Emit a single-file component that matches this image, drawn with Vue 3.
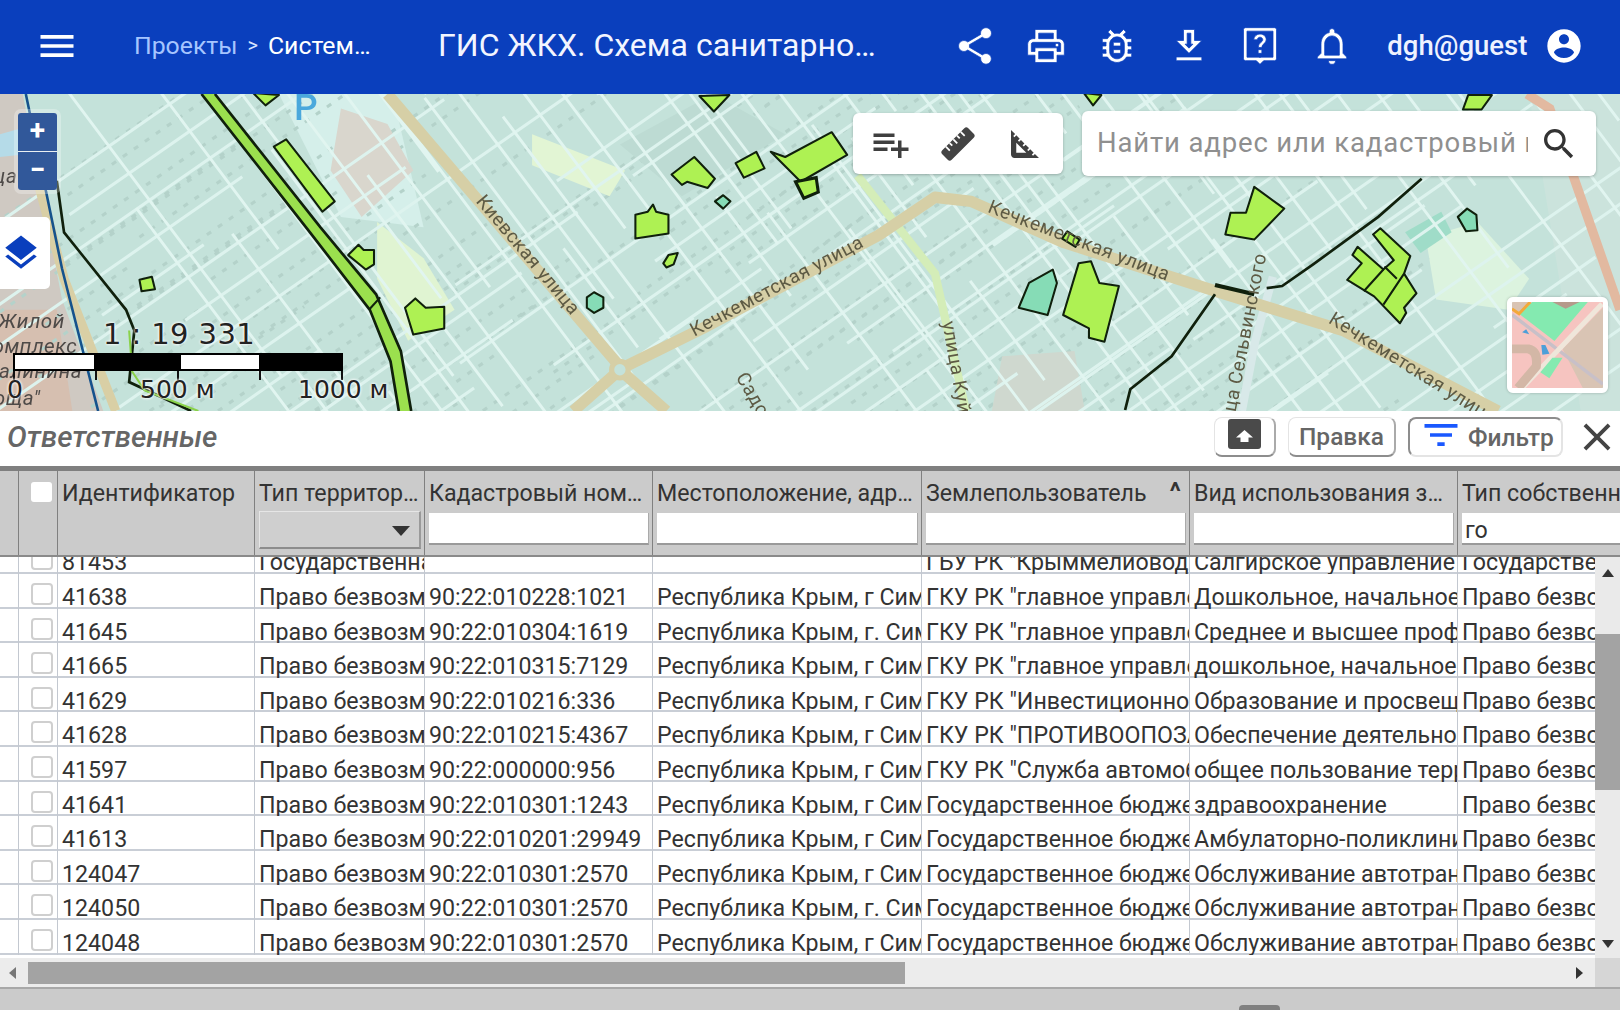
<script setup>
const cols = ['Идентификатор', 'Тип территории', 'Кадастровый номер участка', 'Местоположение, адрес участка', 'Землепользователь', 'Вид использования земли', 'Тип собственности']
const P = 'Право безвозмездного пользования'
const R = 'Республика Крым, г Симферополь'
const G = 'Государственное бюджетное учреждение'
const O = 'Обслуживание автотранспорта'
const rows = [
  ['81453', 'Государственная', '', '', 'ГБУ РК  "Крыммелиоводхоз"', 'Салгирское управление', 'Государственная'],
  ['41638', P, '90:22:010228:1021', R, 'ГКУ РК "главное управление', 'Дошкольное, начальное', P],
  ['41645', P, '90:22:010304:1619', 'Республика Крым, г. Симферополь', 'ГКУ РК "главное управление', 'Среднее и высшее профессиональное', P],
  ['41665', P, '90:22:010315:7129', R, 'ГКУ РК "главное управление', 'дошкольное, начальное и среднее', P],
  ['41629', P, '90:22:010216:336', R, 'ГКУ РК "Инвестиционно-строительное', 'Образование и просвещение', P],
  ['41628', P, '90:22:010215:4367', R, 'ГКУ РК "ПРОТИВООПОЗАРНАЯ', 'Обеспечение деятельности', P],
  ['41597', P, '90:22:000000:956', R, 'ГКУ РК "Служба автомобильных', 'общее пользование территории', P],
  ['41641', P, '90:22:010301:1243', R, G, 'здравоохранение', P],
  ['41613', P, '90:22:010201:29949', R, G, 'Амбулаторно-поликлиническое', P],
  ['124047', P, '90:22:010301:2570', R, G, O, P],
  ['124050', P, '90:22:010301:2570', 'Республика Крым, г. Симферополь', G, O, P],
  ['124048', P, '90:22:010301:2570', R, G, O, P],
]
const topIcons = [
  'M18 16.08c-.76 0-1.44.3-1.96.77L8.91 12.7c.05-.23.09-.46.09-.7s-.04-.47-.09-.7l7.05-4.11c.54.5 1.25.81 2.04.81 1.66 0 3-1.34 3-3s-1.34-3-3-3-3 1.34-3 3c0 .24.04.47.09.7L8.04 9.81C7.5 9.31 6.79 9 6 9c-1.66 0-3 1.34-3 3s1.34 3 3 3c.79 0 1.5-.31 2.04-.81l7.12 4.16c-.05.21-.08.43-.08.65 0 1.61 1.31 2.92 2.92 2.92 1.61 0 2.92-1.31 2.92-2.92s-1.31-2.92-2.92-2.92z',
  'M19 8h-1V3H6v5H5c-1.66 0-3 1.34-3 3v6h4v4h12v-4h4v-6c0-1.66-1.34-3-3-3zM8 5h8v3H8V5zm8 12v2H8v-4h8v2zm2-2v-2H6v2H4v-4c0-.55.45-1 1-1h14c.55 0 1 .45 1 1v4h-2z M18 10.5a1 1 0 1 1 0 2 1 1 0 0 1 0-2z',
  'M20 8h-2.81c-.45-.78-1.07-1.45-1.82-1.96L17 4.41 15.59 3l-2.17 2.17C12.96 5.06 12.49 5 12 5c-.49 0-.96.06-1.41.17L8.41 3 7 4.41l1.62 1.63C7.88 6.55 7.26 7.22 6.81 8H4v2h2.09c-.05.33-.09.66-.09 1v1H4v2h2v1c0 .34.04.67.09 1H4v2h2.81c1.04 1.79 2.97 3 5.19 3s4.15-1.21 5.19-3H20v-2h-2.09c.05-.33.09-.66.09-1v-1h2v-2h-2v-1c0-.34-.04-.67-.09-1H20V8zm-4 7c0 2.21-1.79 4-4 4s-4-1.79-4-4v-4c0-2.21 1.79-4 4-4s4 1.79 4 4v4zm-6-1h4v2h-4zm0-4h4v2h-4z',
  'M19 9h-4V3H9v6H5l7 7 7-7zm-8 2V5h2v6h1.17L12 13.17 9.83 11H11zm-6 7h14v2H5z',
  'M4 2h16a1 1 0 0 1 1 1v16a1 1 0 0 1-1 1h-6l-2 2-2-2H4a1 1 0 0 1-1-1V3a1 1 0 0 1 1-1zm.9 1.9v14.200h6.700l.4.4.4-.4h6.700V3.900H4.900z M11 14h2v2h-2z M12 5.500c-1.900 0-3.300 1.300-3.400 3.100h1.900c.1-.8.7-1.400 1.500-1.400s1.500.6 1.500 1.400c0 1.400-2.400 1.600-2.400 4.200h1.900c0-1.900 2.400-2.300 2.400-4.200 0-1.800-1.500-3.100-3.400-3.100z',
  'M12 22c1.100 0 2-.9 2-2h-4c0 1.100.9 2 2 2zm6-6v-5c0-3.070-1.630-5.640-4.500-6.320V4c0-.83-.67-1.500-1.500-1.500s-1.500.67-1.500 1.500v.68C7.640 5.360 6 7.920 6 11v5l-2 2v1h16v-1l-2-2zm-2 1H8v-6c0-2.480 1.510-4.500 4-4.500s4 2.020 4 4.500v6z',
]

// Street network of the base map: two families of parallel streets with a fixed jitter.
function family(dx, dy, ox, oy, nx, ny, count, step, seed, base = 60, grow = 70) {
  const out = []
  for (let i = 0; i < count; i++) {
    const j = ((i * 37 + seed) % 17) - 8
    const cx = ox + nx * i * step + j
    const cy = oy + ny * i * step + j * 0.4
    const len = base + ((i * 53 + seed) % 5) * grow
    const off = (((i * 29 + seed) % 9) - 4) * 35
    out.push(`M${cx + dx * (off - len)} ${cy + dy * (off - len)}L${cx + dx * (off + len)} ${cy + dy * (off + len)}`)
  }
  return out.join('')
}
const streetsA = family(0.82, -0.57, 130, 130, 0.57, 0.82, 34, 30, 3) + family(0.82, -0.57, 700, 60, 0.57, 0.82, 30, 24, 11) + family(0.82, -0.57, 1150, 40, 0.57, 0.82, 26, 26, 5)
const streetsB = family(0.6, 0.8, 90, 120, 0.8, -0.6, 30, 34, 7) + family(0.6, 0.8, 300, 420, 0.8, -0.6, 44, 28, 2) + family(0.6, 0.8, 900, 420, 0.8, -0.6, 28, 30, 13)
const houses = family(0.82, -0.57, 140, 120, 0.57, 0.82, 60, 15, 4, 50, 60) + family(0.82, -0.57, 760, 50, 0.57, 0.82, 60, 13, 9, 50, 60)

const green = [
  '245,90 270,92 257,102', '265,142 277,135 324,195 312,205', '677,93 706,92 691,108',
  '650,169 672,152 692,173 685,182 665,176 660,179', '712,158 732,147 740,163 720,172',
  '746,147 760,152 805,128 820,150 775,176', '615,208 627,205 632,198 635,205 647,208 647,226 615,231',
  '642,255 647,247 656,245 652,256 645,259', '337,247 347,237 352,242 362,242 362,256 354,261',
  '135,271 147,268 150,280 137,282', '392,298 402,289 412,298 430,297 430,318 400,324',
  '1049,90 1066,92 1058,102', '1416,106 1421,92 1444,92 1434,106',
  '1214,181 1243,202 1214,232 1186,227 1191,206 1206,206', '1028,231 1033,224 1045,232 1041,239',
  '1329,227 1336,221 1365,248 1359,265 1371,284 1359,298 1361,303 1355,313 1330,287 1304,271 1318,255 1309,247 1314,239 1339,261 1349,252',
  '1044,255 1056,253 1064,274 1083,277 1069,331 1054,327 1054,318 1029,305',
]
const teal = ['692,195 700,189 707,195 700,202', '1411,210 1420,202 1429,208 1430,223 1419,224', '986,298 996,274 1019,261 1023,274 1014,305', '568,288 575,283 584,288 584,298 575,303 568,298']
</script>

<template>
  <div class="page">
    <header class="top">
      <svg class="ico menu" viewBox="0 0 24 24"><path d="M3 18h18v-2H3v2zm0-5h18v-2H3v2zm0-7v2h18V6H3z" /></svg>
      <div class="crumbs"><span class="crumb-a">Проекты</span><span class="crumb-sep">&gt;</span><span class="crumb-b">Система управления</span></div>
      <div class="title">ГИС ЖКХ. Схема санитарного состояния</div>
      <div class="top-icons">
        <span v-for="(d, i) in topIcons" :key="i" class="top-cell"><svg class="ico" viewBox="0 0 24 24"><path :d="d" fill-rule="evenodd" /></svg></span>
      </div>
      <div class="user">dgh@guest</div>
      <svg class="ico avatar" viewBox="0 0 24 24"><path d="M12 2C6.48 2 2 6.48 2 12s4.48 10 10 10 10-4.48 10-10S17.52 2 12 2zm0 3c1.66 0 3 1.34 3 3s-1.34 3-3 3-3-1.34-3-3 1.34-3 3-3zm0 14.2c-2.5 0-4.71-1.28-6-3.22.03-1.99 4-3.08 6-3.08 1.99 0 5.97 1.09 6 3.08-1.29 1.94-3.5 3.22-6 3.22z" /></svg>
    </header>

    <section class="map">
      <svg class="base" viewBox="0 91 1568 307" preserveAspectRatio="none">
        <rect x="0" y="91" width="1568" height="307" fill="#c4e2da" />
        <polygon points="0,91 22,91 60,290 100,398 0,398" fill="#cfc9c2" />
        <polygon points="0,300 55,300 70,398 0,398" fill="#d6bfb0" />
        <polygon points="0,130 18,125 18,150 0,152" fill="#b5dbe8" />
        <polygon points="1480,91 1568,91 1568,398 1530,398" fill="#cbe3dc" />
        <polygon points="270,91 380,91 410,220 330,210" fill="#d5efea" />
        <path :d="houses" stroke="#b4d2ca" stroke-width="3" stroke-dasharray="5 8" fill="none" />
        <polygon points="330,105 375,120 400,165 350,210 320,165" fill="#d9d6cd" />
        <polygon points="600,140 690,91 760,130 660,190" fill="#bddbd3" />
        <polygon points="515,130 605,165 590,190 515,160" fill="#e2f5d4" />
        <polygon points="365,215 410,250 440,300 395,330 365,270" fill="#e0f4d2" />
        <polygon points="1380,230 1430,215 1480,270 1460,300 1390,290" fill="#dcf3df" />
        <polygon points="1360,225 1395,205 1405,225 1375,245" fill="#9fdcc8" />
        <polygon points="970,345 1040,340 1050,398 960,398" fill="#cfd8cf" />
        <path :d="streetsA" stroke="#ddf3ee" stroke-width="3" fill="none" />
        <path :d="streetsB" stroke="#e1f5f0" stroke-width="2.8" fill="none" />
        <path d="M830 170L905 265L935 398" stroke="#d4edb8" stroke-width="8" fill="none" />
        <path d="M1232 268L1215 330L1202 398" stroke="#d8e9e9" stroke-width="8" fill="none" />
        <path d="M375 91L600 355M600 358L555 398M600 358L645 398M605 355L680 318L850 228L905 191L940 195L1030 235L1180 283L1300 320L1450 398" stroke="#d6cfa6" stroke-width="11" fill="none" stroke-linejoin="round" />
        <circle cx="600" cy="358" r="8" fill="#c4e2da" stroke="#d6cfa6" stroke-width="5" />
        <path d="M1478 91L1500 105L1568 300" stroke="#e2b9a0" stroke-width="9" fill="none" />
        <path d="M35 170L62 270L112 398" stroke="#d9cfa5" stroke-width="9" fill="none" />
        <path d="M25 91L60 260L95 398" stroke="#15528c" stroke-width="2.5" fill="none" />
        <path d="M195 91L300 225L358 300L378 350L386 398L398 398L388 340L364 285L310 220L208 91Z" fill="#9be04e" />
        <path d="M195 91L300 225L358 300L378 350L386 398M208 91L310 220L364 285L388 340L398 398" fill="none" stroke="#10200c" stroke-width="2.6" />
        <path d="M358 299L368 288" stroke="#10200c" stroke-width="2" />
        <path d="M55 175L62 225L78 245L122 300L130 320L125 370L185 398" fill="none" stroke="#10200c" stroke-width="2.6" />
        <path d="M125 320L128 360L140 378L192 398" fill="none" stroke="#8ad24a" stroke-width="2" />
        <g fill="#aef153" stroke="#10200c" stroke-width="2" stroke-linejoin="round">
          <polygon v-for="(p, i) in green" :key="i" :points="p" />
        </g>
        <g fill="#86dcb6" stroke="#10200c" stroke-width="2" stroke-linejoin="round">
          <polygon v-for="(p, i) in teal" :key="i" :points="p" />
        </g>
        <polygon points="770,176 790,172 792,186 778,192" fill="#aef153" stroke="#10200c" stroke-width="3" />
        <path d="M1339 261L1320 282M1359 265L1339 295M1340 258L1352 270" fill="none" stroke="#10200c" stroke-width="2" />
        <path d="M1376 173L1334 210L1271 256L1241 277L1226 279" fill="none" stroke="#10200c" stroke-width="2.6" />
        <path d="M1176 276L1214 285" stroke="#10200c" stroke-width="4" />
        <path d="M1176 285L1134 345L1094 377L1089 397" fill="none" stroke="#10200c" stroke-width="2.6" />
        <text x="296" y="116" class="parking">P</text>
        <g class="road-label">
          <text transform="translate(460 195) rotate(50)">Киевская улица</text>
          <text transform="translate(672 326) rotate(-28)">Кечкеметская улица</text>
          <text transform="translate(955 205) rotate(21)">Кечкеметская улица</text>
          <text transform="translate(1285 312) rotate(32)">Кечкеметская улица</text>
          <text transform="translate(912 312) rotate(80)">улица Куйбышева</text>
          <text transform="translate(1190 430) rotate(-79)">улица Сельвинского</text>
          <text transform="translate(712 365) rotate(60)">Садовая</text>
          <text transform="translate(-2 318)" class="dark">Жилой</text>
          <text transform="translate(-18 342)" class="dark">комплекс</text>
          <text transform="translate(-14 366)" class="dark">Калинина</text>
          <text transform="translate(-6 392)" class="dark">оща"</text>
          <text transform="translate(-18 177)" class="dark">ица</text>
        </g>
      </svg>

      <div class="zoom-ctl">
        <div class="zoom-btn">+</div>
        <div class="zoom-btn">−</div>
      </div>
      <div class="layers">
        <svg class="layers-ico" viewBox="0 0 24 24"><path d="M11.99 18.54l-7.37-5.73L3 14.07l9 7 9-7-1.63-1.27-7.38 5.74zM12 16l7.36-5.73L21 9l-9-7-9 7 1.63 1.27L12 16z" /></svg>
      </div>

      <div class="scale">
        <div class="ratio">1 : 19 331</div>
        <div class="bar"><i class="w"></i><i class="b"></i><i class="w w2"></i><i class="b b2"></i></div>
        <div class="ticks"><i v-for="n in 5" :key="n"></i></div>
        <div class="labels"><span>0</span><span>500 м</span><span>1000 м</span></div>
      </div>

      <div class="tools">
        <svg class="tool" viewBox="0 0 24 24"><path d="M14 10H2v2h12v-2zm0-4H2v2h12V6zm4 8v-4h-2v4h-4v2h4v4h2v-4h4v-2h-4zM2 16h8v-2H2v2z" /></svg>
        <svg class="tool" viewBox="0 0 24 24"><g transform="rotate(-45 12 12)"><rect x="1.500" y="8.200" width="21" height="7.600" rx="1.600" fill="#444" /><path d="M6 8.200v3.200M9 8.200v2.200M12 8.200v3.200M15 8.200v2.200M18 8.200v3.200" stroke="#fff" stroke-width="1" /></g></svg>
        <svg class="tool" viewBox="0 0 24 24"><path d="M17.66 17.66l-1.06 1.06-.71-.71 1.06-1.06-1.94-1.94-1.06 1.06-.71-.71 1.06-1.06-1.94-1.94-1.06 1.06-.71-.71 1.06-1.06L9.7 9.7l-1.06 1.06-.71-.71 1.06-1.06-1.94-1.94-1.06 1.06-.71-.71 1.06-1.06L4 4v14c0 1.1.9 2 2 2h14l-2.34-2.34zM7 17v-5.76L12.76 17H7z" /></svg>
      </div>
      <div class="search">
        <input class="search-input" placeholder="Найти адрес или кадастровый номер" />
        <svg class="search-ico" viewBox="0 0 24 24"><path d="M15.5 14h-.79l-.28-.27C15.41 12.59 16 11.11 16 9.5 16 5.91 13.09 3 9.5 3S3 5.91 3 9.5 5.91 16 9.5 16c1.61 0 3.09-.59 4.23-1.57l.27.28v.79l5 4.99L20.49 19l-4.99-5zm-6 0C7.01 14 5 11.99 5 9.5S7.01 5 9.5 5 14 7.01 14 9.5 11.99 14 9.5 14z" /></svg>
      </div>
      <div class="minimap">
        <svg viewBox="0 0 90 88" preserveAspectRatio="none">
          <rect width="90" height="88" fill="#f6c4c0" />
          <polygon points="7,12 20,0 75,0 42,40" fill="#84eab0" />
          <polygon points="50,48 90,6 90,88 70,88" fill="#d9c4b4" />
          <polygon points="0,0 18,0 7,12 0,7" fill="#d9c4b4" />
          <path d="M0 13L90 84" stroke="#c8c0c8" stroke-width="3.500" />
          <path d="M89 2L10 88" stroke="#efe6da" stroke-width="5" />
          <path d="M0 7L7 12L18 0" stroke="#f3a93a" stroke-width="3" fill="none" />
          <path d="M0 48H16Q26 50 24 66L6 88" stroke="#d3b7a6" stroke-width="9" fill="none" />
          <polygon points="40,57 50,57 37,78 28,72" fill="#84eab0" />
          <polygon points="29,44 33,44 37,53 30,54" fill="#4d9fd8" />
          <polygon points="10,31 14,28 17,33" fill="#4d9fd8" />
          <polygon points="40,0 67,0 53,7" fill="#b59a8b" />
        </svg>
      </div>
    </section>

    <section class="panel">
      <div class="bar-top">
        <div class="panel-title">Ответственные</div>
        <div class="btn btn-icon">
          <svg class="upload" viewBox="0 0 33 30"><rect width="33" height="30" rx="3" fill="#4a4a4a" /><path d="M16.5 11L25 18.5H20.5V23H12.500V18.500H8Z" fill="#fff" /></svg>
        </div>
        <div class="btn">Правка</div>
        <div class="btn btn-filter">
          <svg class="filter-ico" viewBox="0 0 24 24"><path d="M10 18h4v-2h-4v2zM3 6v2h18V6H3zm3 7h12v-2H6v2z" /></svg>
          <span>Фильтр</span>
        </div>
        <svg class="close" viewBox="0 0 24 24"><path d="M19 6.410L17.590 5 12 10.590 6.410 5 5 6.410 10.590 12 5 17.590 6.410 19 12 13.410 17.590 19 19 17.590 13.410 12z" /></svg>
      </div>

      <div class="grid-head">
        <div class="hcell"></div>
        <div class="hcell check-h"><span class="cb-white"></span></div>
        <div v-for="(c, i) in cols" :key="c" class="hcell" :class="{ sorted: i === 4, last: i === 6 }">
          <div class="hlabel">{{ c }}</div>
          <span v-if="i === 4" class="sort">^</span>
          <div v-if="i === 1" class="hselect"><span class="caret"></span></div>
          <div v-else-if="i > 1" class="hinput">{{ i === 6 ? 'го' : '' }}</div>
        </div>
      </div>

      <div class="grid-main">
        <div class="grid-body">
          <div class="rows">
            <div v-for="r in rows" :key="r[0]" class="row">
              <div class="cell"></div>
              <div class="cell check"><span class="cb"></span></div>
              <div v-for="(v, i) in r" :key="i" class="cell text">{{ v }}</div>
            </div>
          </div>
        </div>
        <div class="vscroll">
          <span class="arr up"></span>
          <div class="vspace"><div class="vthumb"></div></div>
          <span class="arr down"></span>
        </div>
      </div>

      <div class="hscroll-row">
        <div class="hscroll">
          <span class="arr left"></span>
          <div class="hspace"><div class="hthumb"></div></div>
          <span class="arr right"></span>
        </div>
        <div class="corner"></div>
      </div>

      <div class="footer"><div class="grip"></div></div>
    </section>
  </div>
</template>

<style>
html, body { margin: 0; padding: 0; background: #fff; overflow: hidden; }
</style>

<style scoped>
.page { width: 1620px; height: 1010px; display: flex; flex-direction: column; overflow: hidden; font-family: Roboto, "Noto Sans", sans-serif; color: #333; }

.top { flex: 0 0 94px; background: #0a3fbd; display: flex; align-items: center; color: #fff; }
.ico { width: 44px; height: 44px; fill: #fff; flex: none; }
.menu { margin-left: 35px; margin-top: -2px; }
.crumbs { margin-left: 55px; width: 248px; display: flex; align-items: center; font-size: 24.800px; white-space: nowrap; margin-top: -4px; }
.crumb-a { color: #a6c5ff; }
.crumb-sep { color: #d8e4ff; margin: 0 10px; font-size: 20px; }
.crumb-b { color: #fff; width: 104px; overflow: hidden; text-overflow: ellipsis; font-weight: 400; }
.title { margin-left: 56px; width: 441px; font-size: 32px; white-space: nowrap; overflow: hidden; text-overflow: ellipsis; color: #f2f5ff; margin-top: -4px; }
.top-icons { margin-left: 60px; display: flex; margin-top: -2px; }
.top-cell { width: 71.4px; display: flex; justify-content: center; }
.top-cell path { stroke: #0a3fbd; stroke-width: .4; }
.user { margin-left: 20px; font-size: 27.500px; font-weight: 500; color: #eef2ff; width: 149px; margin-top: -4px; white-space: nowrap; }
.avatar { width: 40px; height: 40px; margin-left: 8px; margin-top: -2px; }

.map { flex: 0 0 317px; position: relative; overflow: hidden; background: #c4e2da; }
.base { position: absolute; inset: 0; width: 100%; height: 100%; filter: blur(0.7px); }
.parking { fill: #4aa8dc; font: 500 36px Roboto, sans-serif; text-anchor: middle; }
.road-label text { font: 18.500px Roboto, sans-serif; fill: #5d5a44; letter-spacing: .5px; }
.road-label text.dark { font: italic 20px Roboto, sans-serif; fill: #4e4a48; }

.zoom-ctl { position: absolute; left: 18px; top: 19px; width: 39px; height: 77px; border-radius: 3px; overflow: hidden; display: flex; flex-direction: column; gap: 1px; background: #e9eff2; box-shadow: 0 0 0 4px rgba(255,255,255,.28); }
.zoom-btn { flex: 1; background: #31589a; color: #fff; font-size: 28px; font-weight: 700; line-height: 36px; text-align: center; }
.layers { position: absolute; left: 0; top: 123px; width: 50px; height: 72px; background: #fff; border-radius: 0 5px 5px 0; display: flex; align-items: center; justify-content: center; }
.layers-ico { width: 42px; height: 42px; fill: #0a3fbd; margin-left: -8px; }

.scale { position: absolute; left: 13px; top: 222px; width: 400px; height: 95px; }
.ratio { font: 29px "DejaVu Sans", sans-serif; letter-spacing: .4px; color: #222; margin-left: 90px; line-height: 36px; text-shadow: 0 0 3px #fff, 0 0 3px #fff; }
.bar { width: 330px; height: 18px; display: flex; background: #000; box-sizing: border-box; border: 2px solid #000; margin-top: 1px; }
.bar i { display: block; height: 100%; }
.bar .w { width: 79px; background: #fff; }
.bar .b { width: 87px; background: #000; }
.bar .b2 { width: 82px; }
.ticks { display: flex; width: 330px; height: 9px; justify-content: space-between; }
.ticks i { display: block; width: 2px; height: 9px; background: #111; }
.labels { position: relative; font: 25px "DejaVu Sans", sans-serif; color: #222; display: flex; text-shadow: 0 0 3px #fff, 0 0 3px #fff; margin-top: -5px; white-space: nowrap; }
.labels span:nth-child(1) { margin-left: -6px; width: 133px; }
.labels span:nth-child(2) { width: 158px; }

.tools { position: absolute; left: 853px; top: 19px; width: 210px; height: 61px; background: #fff; border-radius: 6px; box-shadow: 0 1px 3px rgba(0,0,0,.25); display: flex; align-items: center; padding-left: 17px; gap: 25px; box-sizing: border-box; }
.tool { width: 42px; height: 42px; fill: #3f3f3f; flex: none; }
.search { position: absolute; left: 1082px; top: 17px; width: 514px; height: 65px; background: #fff; border-radius: 6px; box-shadow: 0 1px 3px rgba(0,0,0,.25); display: flex; align-items: center; padding-left: 15px; box-sizing: border-box; }
.search-input { width: 431px; border: 0; outline: 0; padding: 0; margin-top: -2px; background: transparent; font: 27.500px Roboto, sans-serif; letter-spacing: .85px; color: #333; }
.search-input::placeholder { color: #8f8f8f; opacity: 1; }
.search-ico { width: 40px; height: 40px; fill: #333; margin-left: 11px; }
.minimap { position: absolute; left: 1507px; top: 203px; width: 101px; height: 96px; border: 5px solid #fff; border-radius: 6px; box-sizing: border-box; box-shadow: 0 0 3px rgba(0,0,0,.25); overflow: hidden; }
.minimap svg { display: block; width: 100%; height: 100%; filter: blur(.6px); }

.panel { flex: 1; display: flex; flex-direction: column; min-height: 0; }
.bar-top { flex: 0 0 55px; box-sizing: border-box; display: flex; align-items: center; padding: 0 0 3px 7px; background: #fff; }
.panel-title { font-size: 29.500px; font-style: italic; font-weight: 500; color: #666; flex: 1; }
.btn { height: 40px; box-sizing: border-box; border: 1px solid #e4e4e4; border-right: 2px solid #aaa; border-bottom: 2px solid #8d8d8d; border-radius: 8px; display: flex; align-items: center; justify-content: center; color: #666; font-size: 24.500px; font-weight: 500; margin-right: 12px; width: 108px; background: #fff; }
.btn-icon { width: 62px; align-items: flex-start; }
.upload { width: 33px; height: 30px; margin-top: 1px; }
.btn-filter { width: 155px; margin-right: 14px; border: 2px solid #8d8d8d; border-right-color: #e4e4e4; border-bottom-color: #e4e4e4; gap: 5px; justify-content: flex-start; padding-left: 9px; }
.filter-ico { width: 44px; height: 44px; fill: #1a58ff; flex: none; margin-top: -4px; }
.close { width: 46px; height: 46px; fill: #444; margin-left: -3px; flex: none; }

.grid-head, .row { display: grid; grid-template-columns: 19px 39px 197px 170px 228px 269px 268px 268px 163px; }
.grid-head { flex: 0 0 91px; height: 91px; box-sizing: border-box; background: #cbcbcb; border-top: 5px solid #7f7f7f; border-bottom: 2px solid #8a8a8a; }
.hcell { position: relative; min-width: 0; box-sizing: border-box; border-right: 1px solid #808080; padding: 0 3px 0 4px; }
.hcell.last { border-right: 0; padding-right: 0; }
.hlabel { font-size: 23.200px; line-height: 26px; padding-top: 9px; height: 37px; box-sizing: border-box; white-space: nowrap; overflow: hidden; text-overflow: ellipsis; color: #333; }
.last .hlabel { text-overflow: clip; }
.sorted .hlabel { padding-right: 20px; }
.sort { position: absolute; right: 8px; top: 7px; font-size: 26px; font-weight: 700; color: #333; line-height: 26px; }
.cb-white { position: absolute; left: 12px; top: 11px; width: 21px; height: 20px; background: #fff; border-radius: 3px; }
.hinput { height: 32px; margin-top: 5px; background: #fff; border-bottom: 2px solid #9a9a9a; border-right: 1px solid #aaa; box-sizing: border-box; font-size: 23.200px; line-height: 34px; padding-left: 3px; color: #333; overflow: hidden; }
.hselect { height: 38px; margin-top: 3px; background: #cfcfcf; border: 1px solid #e6e6e6; border-right: 2px solid #9a9a9a; border-bottom: 2px solid #8d8d8d; box-sizing: border-box; position: relative; }
.caret { position: absolute; right: 9px; top: 14px; width: 0; height: 0; border-left: 9px solid transparent; border-right: 9px solid transparent; border-top: 10px solid #333; }

.grid-main { flex: 0 0 401px; height: 401px; display: flex; overflow: hidden; }
.grid-body { flex: 1; min-width: 0; overflow: hidden; background: #fff; }
.rows { margin-top: -17.600px; }
.row { height: 34.600px; box-sizing: border-box; border-bottom: 2px solid #c9ced6; }
.cell { min-width: 0; box-sizing: border-box; border-right: 1px solid #c3c8d0; height: 34.600px; }
.cell.text { font-size: 23.200px; line-height: 28px; padding-top: 9px; padding-left: 4px; white-space: nowrap; overflow: hidden; color: #333; }
.check { position: relative; }
.cb { position: absolute; left: 12px; top: 9px; width: 22px; height: 22px; box-sizing: border-box; border: 2px solid #cfcfcf; border-radius: 4px; background: #fff; }

.vscroll { flex: 0 0 25px; background: #eaeaea; display: flex; flex-direction: column; align-items: center; }
.vspace { flex: 1; width: 100%; padding-top: 57px; box-sizing: border-box; }
.vthumb { width: 100%; height: 156px; background: #a3a3a3; }
.arr { display: block; width: 0; height: 0; flex: none; }
.arr.up { margin-top: 12px; border-left: 6px solid transparent; border-right: 6px solid transparent; border-bottom: 8px solid #333; }
.arr.down { margin-bottom: 10px; border-left: 6px solid transparent; border-right: 6px solid transparent; border-top: 8px solid #333; }

.hscroll-row { flex: 0 0 29px; display: flex; }
.hscroll { flex: 1; background: #ececec; display: flex; align-items: center; padding: 0 12px 0 9px; }
.hspace { flex: 1; height: 22px; padding: 0 8px 0 12px; }
.hthumb { width: 877px; height: 22px; background: #a3a3a3; }
.arr.left { border-top: 6px solid transparent; border-bottom: 6px solid transparent; border-right: 7px solid #777; }
.arr.right { border-top: 6px solid transparent; border-bottom: 6px solid transparent; border-left: 7px solid #333; }
.corner { flex: 0 0 25px; background: #d6d6d6; }

.footer { flex: 1; background: #cbcbcb; border-top: 2px solid #a8a8a8; display: flex; justify-content: flex-end; align-items: flex-end; }
.grip { width: 41px; height: 5px; background: #808080; border-radius: 4px 4px 0 0; margin-right: 340px; }
</style>
